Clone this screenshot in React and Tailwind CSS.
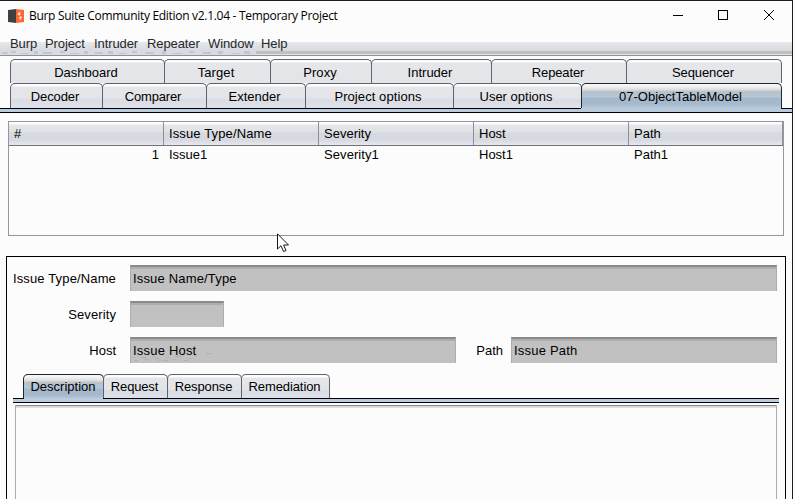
import React from "react";

const TOP = [
  ["Dashboard", "w-[155px]", "-ml-[3px] tracking-[0px]"],
  ["Target", "w-[107px]", "-ml-[3px] tracking-[0.1px]"],
  ["Proxy", "w-[102px]", "-ml-[2px] tracking-[0.1px]"],
  ["Intruder", "w-[121px]", "-ml-[3px] tracking-[0px]"],
  ["Repeater", "w-[136px]", "-ml-[2px] tracking-[-0.15px]"],
  ["Sequencer", "w-[156px]", "-ml-[2px] tracking-[-0.1px]"],
];
const SECOND = [
  ["Decoder", "w-[93px]", "-ml-[3px] tracking-[-0.1px]"],
  ["Comparer", "w-[105px]", "-ml-[3px] tracking-[-0.15px]"],
  ["Extender", "w-[100px]", "-ml-[3px] tracking-[0px]"],
  ["Project options", "w-[149px]", "-ml-[3px] tracking-[0.08px]"],
  ["User options", "w-[129px]", "-ml-[3px] tracking-[0px]"],
  ["07-ObjectTableModel", "w-[201px]", "-ml-[2px] tracking-[0px]"],
];
const DETAIL = [
  ["Description", "w-[81px]", "-ml-px tracking-[0px]"],
  ["Request", "w-[65px]", "-ml-[2px] tracking-[-0.15px]"],
  ["Response", "w-[75px]", "-ml-[2px] tracking-[-0.1px]"],
  ["Remediation", "w-[89px]", "-ml-[2px] tracking-[-0.1px]"],
];

const IDLE =
  "border-[#5d646d] bg-[linear-gradient(#fdfdfd_0px,#fdfdfd_2px,#e4e6ea_3px,#e3e5e9_14px,#d9dce3_16px,#dfe2e8_24px)]";
const IDLE_BACK =
  "border-[#5d646d] bg-[linear-gradient(#fdfdfd_0px,#fdfdfd_2px,#e4e6ea_3px,#e3e5e9_24px)]";
const ACTIVE =
  "border-[#20262f] bg-[linear-gradient(#fafafa_0px,#eeeeee_3px,#d8dadd_6px,#c6c6c6_7px,#bfc0c2_8px,#b2c3d3_9px,#b5c7d8_13px,#a5b8cc_14px,#a5b8cc_20px,#b8cadb_24px)]";

function Tabs({ items, selected, height, idle = IDLE, leading = "leading-[19px]" }) {
  return (
    <div className={"flex " + height}>
      {items.map(([label, width, tracking]) => (
        <div
          key={label}
          className={
            "-mr-px flex justify-center rounded-t-[5px] border border-b-0 pt-[3px] " +
            leading + " " + width + " " + height + " " + (label === selected ? ACTIVE : idle)
          }
        >
          <span className={tracking}>{label}</span>
        </div>
      ))}
    </div>
  );
}

function Field({ className, children }) {
  return (
    <div
      className={
        "h-[26px] border-x border-t-2 border-x-[#adadad] border-t-[#8b8b8b] bg-[linear-gradient(#adadad_0px,#adadad_2px,#c1c1c1_2px)] pl-[2px] leading-[24px] " +
        className
      }
    >
      {children}
    </div>
  );
}

function Header({ width, children }) {
  return (
    <div
      className={
        "h-[23px] border-r border-[#8d9096] bg-[linear-gradient(#fcfcfc_0px,#fcfcfc_2px,#e5e7ea_3px,#dfe1e5_10px,#d6d9df_11px,#d6d9e0_18px,#e6e8ee_23px)] pl-[5px] leading-[23px] " +
        width
      }
    >
      {children}
    </div>
  );
}

export default function App() {
  return (
    <div className="relative flex h-[499px] w-[793px] flex-col overflow-hidden border-t border-r border-[#1d1d20] bg-[#fcfcfc] font-['Liberation_Sans',Arial,sans-serif] text-[13px] whitespace-nowrap text-black">
      {/* title bar */}
      <div className="flex h-[30px] shrink-0 items-center pl-2">
        <svg width="16" height="14" viewBox="0 0 16 14">
          <path d="M0 1L8 0V14L0 13Z" fill="#3b4045" />
          <path d="M8 0L16 1V13L8 14Z" fill="#ff6633" />
          <path d="M12 1.5L9.5 5.5L12.3 7L10.8 9.5L12 10L11.5 12.5L14 8L11.5 6.5L13 4.5L11.5 4Z" fill="#ffe9e0" />
        </svg>
        <span className="ml-[5px] font-['Open_Sans','Noto_Sans',sans-serif] text-[12px] leading-4 tracking-[-0.3px]">
          Burp Suite Community Edition v2.1.04 - Temporary Project
        </span>
        <svg className="ml-auto mr-[17px]" width="102" height="12" viewBox="0 0 102 12" fill="none" stroke="#000" shapeRendering="crispEdges">
          <path d="M0 5.5H10M45.5 0.5H54.5V9.5H45.5Z" />
          <path d="M91 0L101 10M101 0L91 10" shapeRendering="auto" />
        </svg>
      </div>
      {/* menu bar */}
      <div className="relative h-[25px] shrink-0 border-b border-[#8f939c] bg-[linear-gradient(#fcfcfc_0px,#fcfcfc_11px,#e8e9ec_11px,#dfe1e5_15px,#d7dae0_20px,#c0c0c0_20px,#c0c0c0_23px,#dfe1e7_23px)]">
        <svg className="absolute top-[16px] left-0" width="256" height="8" viewBox="0 0 256 8" shapeRendering="crispEdges">
          <path d="M0 4h256v4h-256z" fill="#d8dbe1" />
          <path d="M2 5h6v2H2zM11 4h5v2h-5zM21 6h8v1h-8zM34 4h4v3h-4zM43 5h9v2h-9zM60 4h5v2h-5zM70 6h9v1h-9zM84 4h4v3h-4zM95 5h8v2h-8zM108 4h5v3h-5zM119 6h7v1h-7zM132 4h5v2h-5zM145 5h9v2h-9zM162 4h4v3h-4zM173 6h9v1h-9zM189 4h5v2h-5zM203 5h8v2h-8zM218 4h5v3h-5zM231 6h9v1h-9zM244 4h6v3h-6z" fill="#c5c6c8" />
        </svg>
        <div className="relative flex pl-[10px] leading-[25px] tracking-[-0.1px] text-[#27282b]">
          <span className="w-[35px]">Burp</span>
          <span className="w-[49px]">Project</span>
          <span className="w-[53px]">Intruder</span>
          <span className="w-[61px]">Repeater</span>
          <span className="w-[53px]">Window</span>
          <span>Help</span>
        </div>
      </div>
      {/* main tabs */}
      <div className="shrink-0 pt-[3px] pl-[10px]">
        <Tabs items={TOP} height="h-[24px]" idle={IDLE_BACK} />
        <Tabs items={SECOND} selected="07-ObjectTableModel" height="h-[25px]" />
      </div>
      <div className="flex h-[5px] shrink-0 flex-col border-b border-black bg-[#b8cadb]">
        <div className="flex h-px">
          <div className="w-[581px] bg-black" />
          <div className="w-[200px]" />
          <div className="flex-1 bg-black" />
        </div>
      </div>
      {/* issue table */}
      <div className="mt-2 ml-2 h-[115px] w-[776px] shrink-0 border border-[#9297a1]">
        <div className="flex border-b border-[#6e737c]">
          <Header width="w-[155px]">#</Header>
          <Header width="w-[155px]"><span className="tracking-[0.13px]">Issue Type/Name</span></Header>
          <Header width="w-[155px]">Severity</Header>
          <Header width="w-[155px]">Host</Header>
          <Header width="w-[154px]">Path</Header>
        </div>
        <div className="flex leading-[17px]">
          <div className="w-[155px] pr-[5px] text-right">1</div>
          <div className="w-[155px] pl-[5px]">Issue1</div>
          <div className="w-[155px] pl-[5px] tracking-[0.08px]">Severity1</div>
          <div className="w-[155px] pl-[5px]">Host1</div>
          <div className="pl-[5px]">Path1</div>
        </div>
      </div>
      {/* issue details */}
      <div className="mt-5 ml-[6px] flex h-[260px] w-[780px] shrink-0 flex-col border border-black">
        <div className="mt-2 flex">
          <div className="w-[109px] text-right leading-[27px] tracking-[0.14px]">Issue Type/Name</div>
          <Field className="ml-[14px] w-[647px] tracking-[0.17px]">Issue Name/Type</Field>
        </div>
        <div className="mt-[9px] flex h-[27px]">
          <div className="w-[109px] text-right leading-[27px] tracking-[0.1px]">Severity</div>
          <Field className="ml-[14px] w-[94px]" />
        </div>
        <div className="mt-[9px] flex h-[27px]">
          <div className="w-[109px] text-right leading-[27px]">Host</div>
          <Field className="ml-[14px] w-[326px] tracking-[0.2px]">Issue Host</Field>
          <div className="w-[47px] text-right leading-[27px]">Path</div>
          <Field className="ml-[8px] w-[266px] tracking-[0.2px]">Issue Path</Field>
        </div>
        <div className="mt-[10px] pl-4">
          <Tabs items={DETAIL} selected="Description" height="h-[24px]" leading="leading-[17px]" />
        </div>
        <div className="ml-[6px] h-[5px] w-[766px] shrink-0 border-b border-black bg-[#bccbe0]">
          <div className="flex h-px">
            <div className="w-[11px] bg-black" />
            <div className="w-[79px]" />
            <div className="flex-1 bg-black" />
          </div>
        </div>
        <div className="mt-[2px] ml-2 w-[762px] flex-1 border-x border-t border-x-[#adadad] border-t-[#8b8b8b] bg-[linear-gradient(#d0d0d3_0px,#e8e8ea_2px,#fcfcfc_2px)]" />
      </div>
      {/* faint speckle under the host field text */}
      <svg className="absolute top-[351px] left-[130px]" width="82" height="11" viewBox="0 0 82 11" shapeRendering="crispEdges">
        <path d="M2 5h5v1H2zM9 3h3v1H9zM14 7h6v1h-6zM22 4h4v1h-4zM28 8h5v1h-5zM36 5h3v1h-3zM42 7h4v1h-4zM50 4h3v1h-3zM58 6h4v1h-4z" fill="#a9b9c9" />
        <path d="M4 8h4v1H4zM11 5h5v1h-5zM19 2h3v1h-3zM25 6h4v1h-4zM34 8h4v1h-4zM45 4h5v1h-5zM54 8h4v1h-4zM64 3h3v1h-3zM76 1h5v1h-5z" fill="#b2aeaa" />
      </svg>
      {/* mouse pointer */}
      <svg className="absolute top-[232px] left-[277px]" width="13" height="20" viewBox="0 0 13 20">
        <path d="M.5 .8V16L4 12.7L6.5 18.5L9 17.5L6.6 12H11.5Z" fill="#fff" stroke="#18181c" />
      </svg>
    </div>
  );
}
